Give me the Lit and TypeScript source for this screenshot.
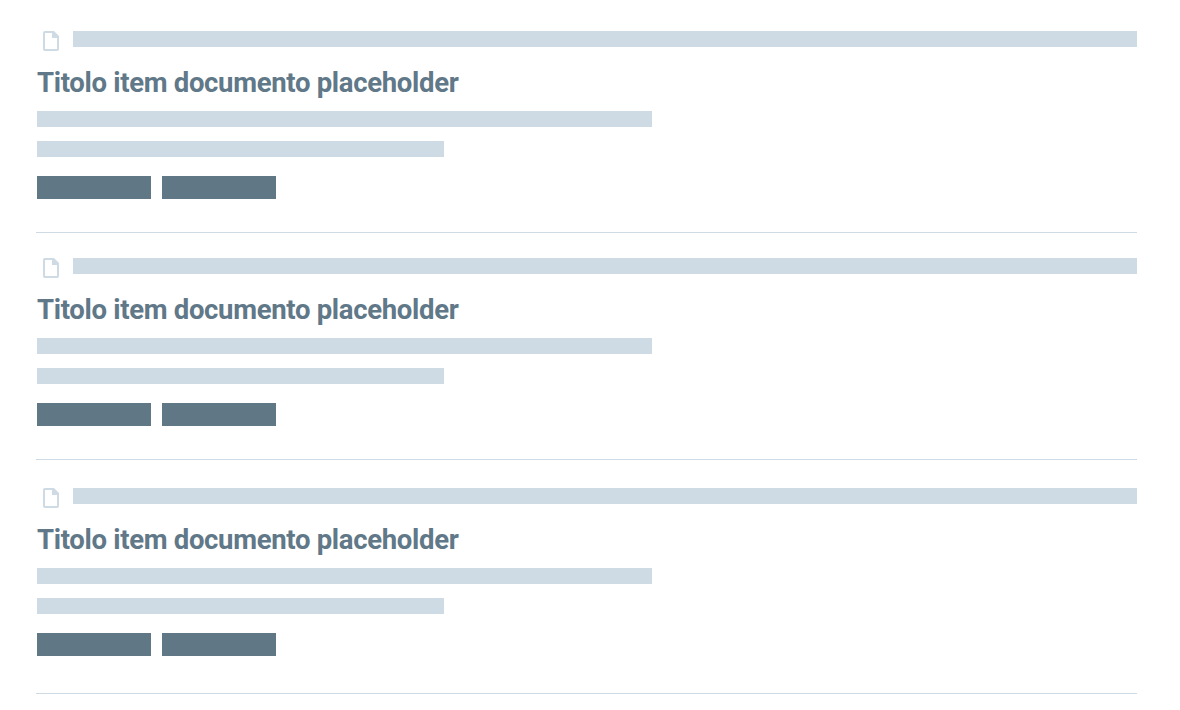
import { LitElement, html, css } from "lit";
import { customElement } from "lit/decorators.js";

@customElement("document-item")
class DocumentItem extends LitElement {
  static styles = css`
    :host {
      display: block;
      border-bottom: 1px solid #cfdbe4;
      padding-left: 1px;
    }
    .meta {
      display: flex;
      align-items: flex-start;
      gap: 14px;
      height: 20px;
      padding-left: 6px;
    }
    .icon {
      display: block;
      flex: none;
      width: 16px;
      height: 20px;
    }
    .bar {
      height: 16px;
      background: #cfdbe4;
    }
    .grow {
      flex: 1;
    }
    .title {
      margin: 0;
      height: 60px;
      font: 700 27.5px/63px Roboto, sans-serif;
      letter-spacing: -0.315px;
      color: #607888;
      white-space: nowrap;
    }
    .long {
      width: 615px;
      margin-bottom: 14px;
    }
    .short {
      width: 407px;
      margin-bottom: 19px;
    }
    .tags {
      display: flex;
      gap: 11px;
    }
    .tag {
      width: 114px;
      height: 23px;
      background: #607786;
    }
  `;

  render() {
    return html`
      <div class="meta">
        <svg class="icon" viewBox="0 0 16 20" fill="none">
          <path d="M10 1H1.8Q1 1 1 1.8V18.2Q1 19 1.8 19H14.2Q15 19 15 18.2V6" stroke="#cfdbe4" stroke-width="2" />
          <path d="M9 0H11L16 5V7H9Z" fill="#cfdbe4" />
        </svg>
        <div class="bar grow"></div>
      </div>
      <h3 class="title">Titolo item documento placeholder</h3>
      <div class="bar long"></div>
      <div class="bar short"></div>
      <div class="tags">
        <div class="tag"></div>
        <div class="tag"></div>
      </div>
    `;
  }
}

@customElement("app-root")
class AppRoot extends LitElement {
  static styles = css`
    :host {
      display: block;
      box-sizing: border-box;
      height: 710px;
      overflow: hidden;
      padding: 0 43px 0 36px;
      background: #fff;
    }
    .first {
      padding-top: 31px;
      padding-bottom: 33px;
    }
    .middle {
      padding-top: 25px;
      padding-bottom: 33px;
    }
    .last {
      padding-top: 28px;
      padding-bottom: 37px;
    }
  `;

  render() {
    return html`
      <document-item class="first"></document-item>
      <document-item class="middle"></document-item>
      <document-item class="last"></document-item>
    `;
  }
}
